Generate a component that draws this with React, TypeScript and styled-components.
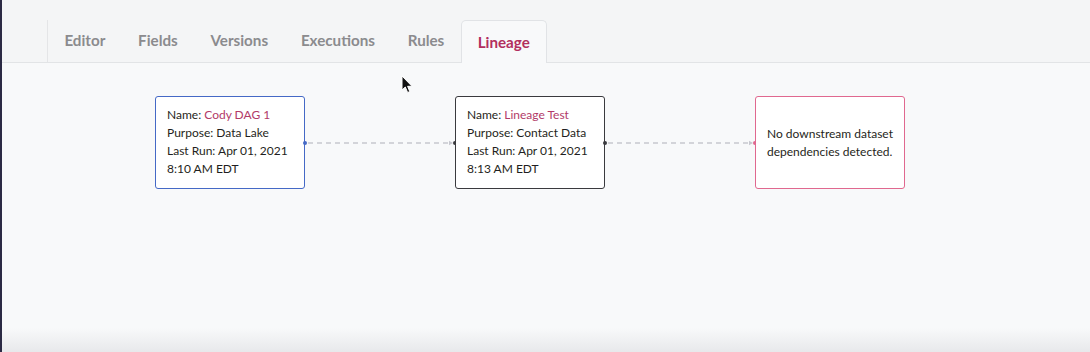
import styled, { createGlobalStyle } from "styled-components";

// --- data ----------------------------------------

const tabs = ["Editor", "Fields", "Versions", "Executions", "Rules", "Lineage"];

type NodeData = {
  name?: string;
  purpose?: string;
  lastRun?: string;
  time?: string;
  message?: string;
  color: string;
};

const nodes: NodeData[] = [
  {
    name: "Cody DAG 1",
    purpose: "Data Lake",
    lastRun: "Apr 01, 2021",
    time: "8:10 AM EDT",
    color: "#4569c6",
  },
  {
    name: "Lineage Test",
    purpose: "Contact Data",
    lastRun: "Apr 01, 2021",
    time: "8:13 AM EDT",
    color: "#3a3a3e",
  },
  {
    message: "No downstream dataset dependencies detected.",
    color: "#e0688f",
  },
];

// --- components ----------------------------------------

function Connector({ from, to }: { from: string; to: string }) {
  return (
    <Link>
      <svg width="150" height="8" viewBox="0 0 150 8" overflow="visible">
        <line
          x1="3"
          y1="4"
          x2="145"
          y2="4"
          stroke="#c6c7ce"
          strokeWidth="1.3"
          strokeDasharray="5 4"
        />
        <path d="M144 1.8 L148 4 L144 6.2 Z" fill="#c6c7ce" />
        <circle cx="0" cy="4" r="2" fill={from} />
        <circle cx="150" cy="4" r="2" fill={to} />
      </svg>
    </Link>
  );
}

function Node({ data }: { data: NodeData }) {
  if (data.message) {
    return (
      <Card $color={data.color} $center>
        {data.message}
      </Card>
    );
  }
  return (
    <Card $color={data.color}>
      <div>
        Name: <Accent>{data.name}</Accent>
      </div>
      <div>Purpose: {data.purpose}</div>
      <div>Last Run: {data.lastRun}</div>
      <div>{data.time}</div>
    </Card>
  );
}

export default function App() {
  return (
    <>
      <GlobalStyle />
      <Shell>
        <Edge />
        <Main>
          <TabBar>
            <TabList>
              {tabs.map((t) => (
                <Tab key={t} $active={t === "Lineage"}>
                  {t}
                </Tab>
              ))}
            </TabList>
          </TabBar>
          <Canvas>
            {nodes.map((n, i) => (
              <Row key={i}>
                {i > 0 && <Connector from={nodes[i - 1].color} to={n.color} />}
                <Node data={n} />
              </Row>
            ))}
          </Canvas>
          <Pointer>
            <svg width="12" height="19" viewBox="0 0 12 19">
              <path
                d="M1 1 L1 15 L4.3 12 L6.6 17.5 L8.8 16.6 L6.6 11.3 L11 11.3 Z"
                fill="#111"
                stroke="#fff"
                strokeWidth="1"
                strokeLinejoin="round"
              />
            </svg>
          </Pointer>
          <Shade />
        </Main>
      </Shell>
    </>
  );
}

// styled

const GlobalStyle = createGlobalStyle`
  html, body {
    margin: 0;
    padding: 0;
    background: #f8f9fa;
  }
  body {
    font-family: Lato, "Open Sans", sans-serif;
  }
`;

const Shell = styled.div`
  display: flex;
  height: 352px;
  overflow: hidden;
`;

const Edge = styled.div`
  width: 2px;
  background: #2b2a44;
`;

const Main = styled.div`
  position: relative;
  flex: 1;
  display: flex;
  flex-direction: column;
  background: #f8f9fa;
`;

const TabBar = styled.div`
  height: 62px;
  display: flex;
  align-items: flex-end;
  padding-left: 45px;
  background: #f4f5f6;
  border-bottom: 1px solid #e2e4e6;
`;

const TabList = styled.div`
  display: flex;
  align-items: flex-end;
  height: 42px;
  border-left: 1px solid #e4e5e7;
`;

const Tab = styled.div<{ $active?: boolean }>`
  display: flex;
  align-items: center;
  box-sizing: border-box;
  height: ${(p) => (p.$active ? "43px" : "42px")};
  margin-bottom: ${(p) => (p.$active ? "-1px" : "0")};
  padding: ${(p) => (p.$active ? "0 16px 1px" : "0 16.4px 2px")};
  font-size: 15.2px;
  font-weight: 700;
  color: ${(p) => (p.$active ? "#b22f5e" : "#8b8b8e")};
  background: ${(p) => (p.$active ? "#f8f9fa" : "transparent")};
  border: ${(p) => (p.$active ? "1px solid #e1e3e6" : "none")};
  border-bottom: none;
  border-radius: 5px 5px 0 0;
`;

const Canvas = styled.div`
  display: flex;
  align-items: flex-start;
  padding: 33px 0 0 153px;
`;

const Row = styled.div`
  display: flex;
`;

const Card = styled.div<{ $color: string; $center?: boolean }>`
  box-sizing: border-box;
  width: 150px;
  height: 93px;
  padding: 9px 11px;
  background: #fff;
  border: 1.3px solid ${(p) => p.$color};
  border-radius: 3px;
  font-size: 12px;
  line-height: 18px;
  color: #1f1f21;
  ${(p) =>
    p.$center &&
    `
    display: flex;
    align-items: center;
  `}
`;

const Accent = styled.span`
  color: #b23a68;
`;

const Link = styled.div`
  width: 150px;
  height: 93px;
  display: flex;
  align-items: center;
`;

const Pointer = styled.div`
  position: absolute;
  left: 399px;
  top: 75px;
  line-height: 0;
`;

const Shade = styled.div`
  position: absolute;
  left: 0;
  right: 0;
  bottom: 0;
  height: 24px;
  background: linear-gradient(to bottom, rgba(230, 231, 234, 0), rgba(226, 227, 230, 0.75));
  pointer-events: none;
`;
